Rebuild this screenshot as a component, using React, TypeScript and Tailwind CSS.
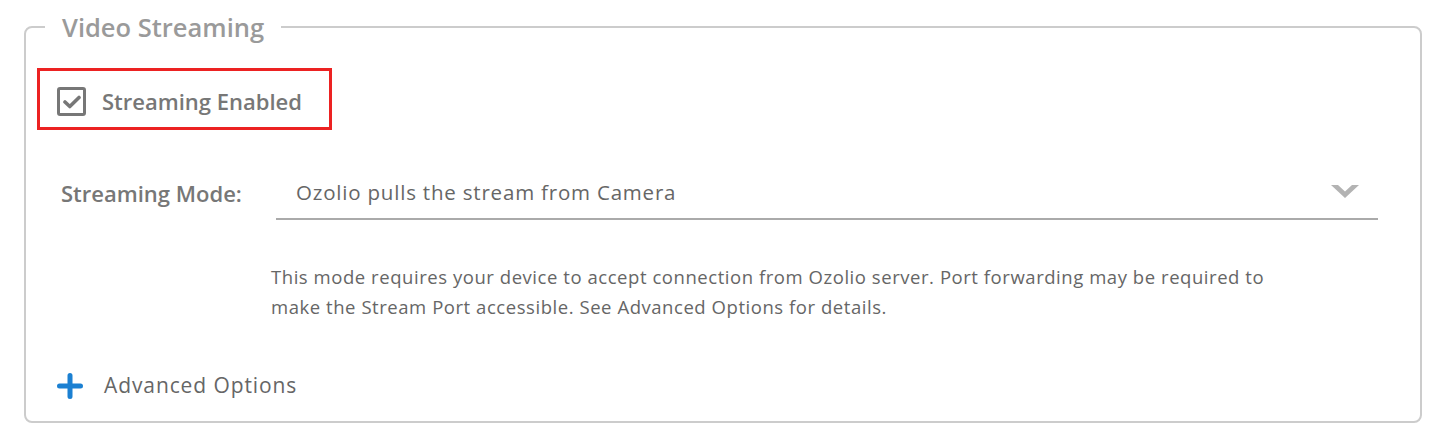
import React, { useState } from 'react';

const font = { fontFamily: '"Open Sans", "Liberation Sans", sans-serif' };

const App = () => {
  const [enabled, setEnabled] = useState(true);

  return (
    <div className="w-[1446px] h-[446px] bg-white pt-[12px]" style={font}>
      <fieldset className="mx-6 h-[411px] border-2 border-[#cccccc] rounded-[8px] px-[11px]">
        <legend className="ml-2 px-[17px] text-[25.5px] leading-[30px] font-semibold text-[#9a9a9a]">Video Streaming</legend>

        {/* checkbox row */}
        <div className="mt-[26px] w-[295px] h-[62px] border-[3px] border-[#ec2222] flex items-start pt-[16px] pl-[17px]">
          <button
            onClick={() => setEnabled(!enabled)}
            className="w-[29px] h-[29px] border-[3px] border-[#777777] rounded-[3px] flex items-center justify-center"
          >
            {enabled && (
              <svg width="18" height="14" viewBox="0 0 18 14" fill="none">
                <path d="M2 7 L6.8 11.5 L16 2.5" stroke="#777777" strokeWidth="3.6" strokeLinecap="round" strokeLinejoin="round" />
              </svg>
            )}
          </button>
          <span className="ml-[16px] text-[22px] leading-[29px] font-semibold text-[#777777]">Streaming Enabled</span>
        </div>

        {/* streaming mode */}
        <div className="mt-[41px] flex items-center">
          <div className="w-[239px] h-[49px] pb-[5px] flex items-center pl-[24px] text-[22px] font-semibold text-[#777777]">Streaming Mode:</div>
          <div className="w-[1102px] h-[49px] pb-[5px] border-b-2 border-[#aaaaaa] flex items-center justify-between pl-[20px] pr-[18px]">
            <span className="text-[20.5px] tracking-[0.8px] text-[#666666]">Ozolio pulls the stream from Camera</span>
            <svg width="30" height="16" viewBox="0 0 30 16">
              <path d="M1 1 L15 14 L29 1 L22 1 L15 7.5 L8 1 Z" fill="#b3b3b3" />
            </svg>
          </div>
        </div>

        <p className="mt-[42px] ml-[234px] text-[18.5px] tracking-[0.55px] leading-[30px] text-[#666666]">
          This mode requires your device to accept connection from Ozolio server. Port forwarding may be required to
          <br />
          make the Stream Port accessible. See Advanced Options for details.
        </p>

        {/* advanced */}
        <div className="mt-[48px] flex items-center pl-[20px]">
          <svg width="26" height="26" viewBox="0 0 26 26">
            <path d="M13 2.5 V23.5 M2.5 13 H23.5" stroke="#1b80d2" strokeWidth="5" strokeLinecap="round" />
          </svg>
          <span className="ml-[21px] text-[21px] tracking-[0.9px] text-[#666666]">Advanced Options</span>
        </div>
      </fieldset>
    </div>
  );
};

export default App;
